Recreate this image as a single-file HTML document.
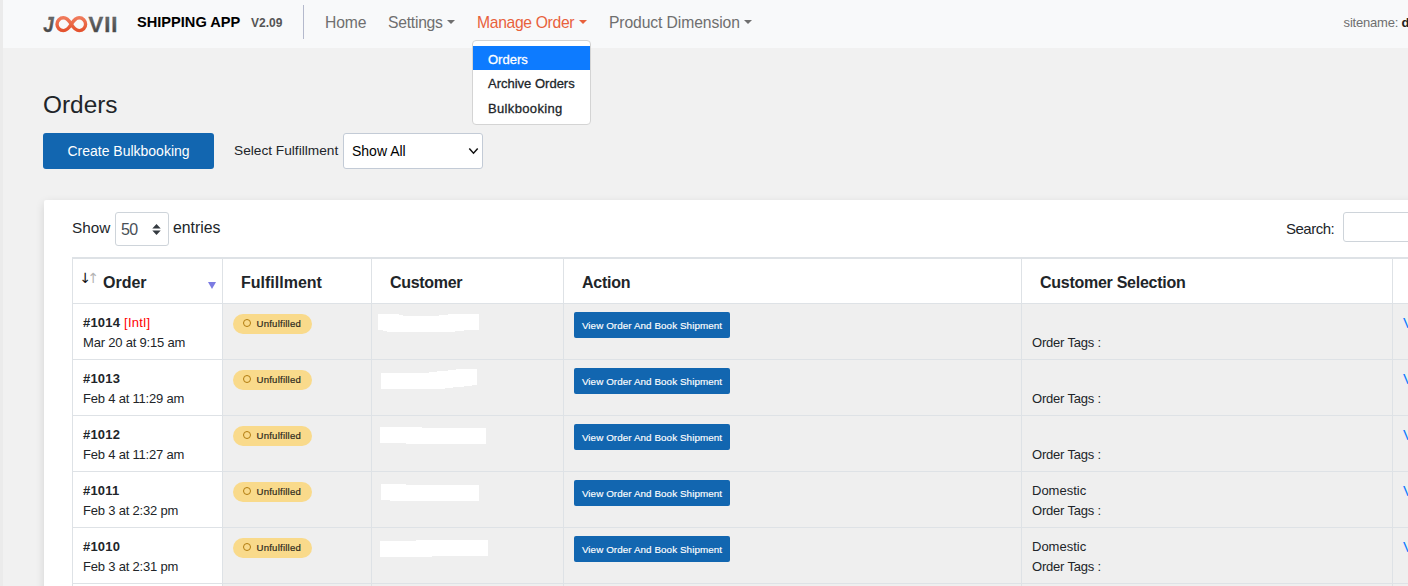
<!DOCTYPE html>
<html lang="en">
<head>
<meta charset="utf-8">
<title>Orders</title>
<style>
*{box-sizing:border-box;}
html,body{margin:0;padding:0;}
body{width:1408px;height:586px;overflow:hidden;background:#f1f1f1;font-family:"Liberation Sans",sans-serif;color:#212529;position:relative;}
.strip{position:absolute;left:0;top:0;width:3px;height:586px;background:#ebebeb;z-index:5;}
.nav{position:absolute;left:3px;top:0;width:1405px;height:48px;background:#f8f9fa;}
.abs{position:absolute;white-space:nowrap;}
.navlink{position:absolute;top:14px;font-size:15.7px;color:#6f6f6f;white-space:nowrap;line-height:18px;}
.caret{display:inline-block;width:0;height:0;border-left:4px solid transparent;border-right:4px solid transparent;border-top:4px solid currentColor;vertical-align:4px;margin-left:4px;}
.dd{position:absolute;left:472px;top:40px;width:119px;height:85px;background:#fff;border:1px solid #d4d4d4;border-radius:4px;}
.dd div{position:absolute;left:0;width:117px;height:24px;padding-left:15px;font-size:13px;line-height:24px;color:#212529;-webkit-text-stroke:0.3px currentColor;}
h1{position:absolute;left:43px;top:89px;margin:0;font-size:24.4px;font-weight:400;color:#212529;line-height:32px;}
.btn{position:absolute;left:43px;top:133px;width:171px;height:36px;background:#1266b0;color:#fff;border-radius:3px;font-size:14px;line-height:36px;text-align:center;}
.sel{position:absolute;left:343px;top:133px;width:140px;height:36px;background:#fff;border:1px solid #c3cbd6;border-radius:3px;font-size:14px;line-height:35px;padding-left:8px;color:#000;}
.card{position:absolute;left:44px;top:200px;width:1400px;height:400px;background:#fff;border-radius:2px;box-shadow:0 3px 10px rgba(0,0,0,.12);}


.th{top:273px;font-size:16px;font-weight:700;line-height:20px;color:#212529;}
.c{font-size:13px;line-height:18px;color:#212529;}

.badge{position:absolute;background:#f9da8b;border-radius:11px;height:20px;width:79px;font-size:9.6px;line-height:19.6px;letter-spacing:0.22px;color:#2e2a20;padding-left:23.5px;-webkit-text-stroke:0.2px currentColor;}
.badge i{position:absolute;left:10px;top:4.6px;width:8.4px;height:8.4px;border:1.5px solid #b27c0e;border-radius:50%;}
.vbtn{position:absolute;background:#1266b0;color:#fff;border-radius:2px;height:26px;width:156px;font-size:9.85px;letter-spacing:0.07px;line-height:28px;text-align:center;-webkit-text-stroke:0.15px currentColor;}
</style>
</head>
<body>
<div class="strip"></div>
<div class="nav"></div>
<svg class="abs" style="left:40px;top:12px" width="82" height="24" viewBox="40 12 82 24">
  <defs>
    <linearGradient id="g1" x1="0" y1="0" x2="0" y2="1"><stop offset="0" stop-color="#f07a5a"/><stop offset="1" stop-color="#e4532f"/></linearGradient>
    <linearGradient id="g2" x1="0" y1="0" x2="0" y2="1"><stop offset="0" stop-color="#777"/><stop offset="1" stop-color="#3c3c3c"/></linearGradient>
  </defs>
  <text x="0" y="32.1" transform="translate(43.2 0) scale(0.86 1)" font-family="Liberation Sans, sans-serif" font-weight="700" font-style="italic" font-size="22" fill="url(#g2)" stroke="#555" stroke-width="0.35">J</text>
  <path d="M71.3 24.2 C68.5 19.5 66.5 17.8 63.4 17.8 a6.4 6.4 0 1 0 0 12.8 C66.5 30.6 68.5 28.9 71.3 24.2 C74.1 19.5 76.1 17.8 79.2 17.8 a6.4 6.4 0 1 1 0 12.8 C76.1 30.6 74.1 28.9 71.3 24.2Z" fill="none" stroke="url(#g1)" stroke-width="3.4"/>
  <text x="88.6" y="31.5" font-family="Liberation Sans, sans-serif" font-weight="700" font-size="22" fill="url(#g2)" stroke="#555" stroke-width="0.35" letter-spacing="0.9">VII</text>
</svg>
<div class="abs" style="left:137px;top:13px;font-size:14.6px;font-weight:700;color:#000;line-height:18px;">SHIPPING APP</div>
<div class="abs" style="left:251px;top:14px;font-size:12px;font-weight:700;color:#555;line-height:18px;">V2.09</div>
<div class="abs" style="left:303px;top:5px;width:1px;height:34px;background:#b4b9cc;"></div>
<div class="navlink" style="left:325px;letter-spacing:-0.1px;">Home</div>
<div class="navlink" style="left:388px;letter-spacing:-0.25px;">Settings<span class="caret"></span></div>
<div class="navlink" style="left:477px;color:#e8613c;letter-spacing:-0.33px;">Manage Order<span class="caret" style="margin-left:5px"></span></div>
<div class="navlink" style="left:609px;letter-spacing:-0.1px;">Product Dimension<span class="caret"></span></div>
<div class="abs" style="left:1343.6px;top:14px;font-size:13px;color:#6f6f6f;line-height:18px;letter-spacing:-0.2px;">sitename: <b style="color:#222">demo</b></div>

<h1>Orders</h1>
<div class="btn">Create Bulkbooking</div>
<div class="abs" style="left:234px;top:142px;font-size:13.7px;line-height:18px;">Select Fulfillment</div>
<div class="sel">Show All
 <svg class="abs" style="left:123.5px;top:12.5px" width="11" height="9" viewBox="0 0 11 9"><path d="M1.3 1.6 L5.5 6.2 L9.7 1.6" fill="none" stroke="#111" stroke-width="1.5"/></svg>
</div>

<div class="card"></div>
<div class="abs" style="left:72px;top:218px;font-size:15.3px;line-height:20px;">Show</div>
<div class="abs" style="left:115px;top:212px;width:54px;height:34px;border:1px solid #ced4da;border-radius:3px;background:#fff;font-size:16px;line-height:34px;padding-left:5px;color:#495057;letter-spacing:-0.7px;">50
 <svg class="abs" style="left:36px;top:11px" width="9" height="11" viewBox="0 0 9 11"><path d="M4.5 0 L8.7 4.5 H0.3Z M4.5 11 L8.7 6.5 H0.3Z" fill="#343a40"/></svg>
</div>
<div class="abs" style="left:173px;top:218px;font-size:15.8px;line-height:20px;">entries</div>
<div class="abs" style="left:1286px;top:219px;font-size:15px;line-height:20px;letter-spacing:-0.5px;">Search:</div>
<div class="abs" style="left:1343px;top:212px;width:100px;height:30px;border:1px solid #ced4da;border-radius:3px;background:#fff;"></div>


<div class="abs" style="left:72px;top:257px;width:1340px;height:2px;background:#dee2e6;"></div>
<div class="abs" style="left:72px;top:259px;width:1340px;height:44px;background:#fff;"></div>
<div class="abs" style="left:223px;top:304px;width:1190px;height:290px;background:#efefef;"></div>
<div class="abs" style="left:72px;top:303px;width:1340px;height:1px;background:#dee2e6;"></div>
<div class="abs" style="left:72px;top:359px;width:1340px;height:1px;background:#dee2e6;"></div>
<div class="abs" style="left:72px;top:415px;width:1340px;height:1px;background:#dee2e6;"></div>
<div class="abs" style="left:72px;top:471px;width:1340px;height:1px;background:#dee2e6;"></div>
<div class="abs" style="left:72px;top:527px;width:1340px;height:1px;background:#dee2e6;"></div>
<div class="abs" style="left:72px;top:583px;width:1340px;height:1px;background:#dee2e6;"></div>
<div class="abs" style="left:72px;top:639px;width:1340px;height:1px;background:#dee2e6;"></div>
<div class="abs" style="left:72px;top:257px;width:1px;height:340px;background:#dee2e6;"></div>
<div class="abs" style="left:222px;top:257px;width:1px;height:340px;background:#dee2e6;"></div>
<div class="abs" style="left:371px;top:257px;width:1px;height:340px;background:#dee2e6;"></div>
<div class="abs" style="left:563px;top:257px;width:1px;height:340px;background:#dee2e6;"></div>
<div class="abs" style="left:1021px;top:257px;width:1px;height:340px;background:#dee2e6;"></div>
<div class="abs" style="left:1392px;top:257px;width:1px;height:340px;background:#dee2e6;"></div>
<div class="abs" style="left:79.5px;top:268px;font-family:'DejaVu Sans',sans-serif;font-size:14px;line-height:20px;color:#111;">&#8595;</div>
<div class="abs" style="left:87.5px;top:268px;font-family:'DejaVu Sans',sans-serif;font-size:14px;line-height:20px;color:#b5b5b5;">&#8593;</div>
<div class="abs th" style="left:103px;">Order</div>
<div class="abs" style="left:208px;top:282px;width:0;height:0;border-left:4.5px solid transparent;border-right:4.5px solid transparent;border-top:7px solid #7b7be2;"></div>
<div class="abs th" style="left:241px;">Fulfillment</div>
<div class="abs th" style="left:390px;letter-spacing:-0.3px;">Customer</div>
<div class="abs th" style="left:582px;letter-spacing:-0.25px;">Action</div>
<div class="abs th" style="left:1040px;letter-spacing:-0.27px;">Customer Selection</div>
<div class="abs c" style="left:83px;top:314px;font-weight:700;letter-spacing:0.2px;">#1014 <span style="color:#f00;font-weight:400;letter-spacing:0.3px;">[Intl]</span></div>
<div class="abs c" style="left:83px;top:334px;letter-spacing:-0.2px;">Mar 20 at 9:15 am</div>
<div class="badge" style="left:233px;top:314px;"><i></i>Unfulfilled</div>
<svg class="abs" style="left:371px;top:303px" width="192" height="56"><polygon points="7,11 28,11 28,12 32,12 32,13 68,13 68,12 77,12 77,11 108,11 108,27 93,27 93,28 84,28 84,29 16,29 16,28 12,28 12,27 7,27" fill="#fff" shape-rendering="crispEdges"/></svg>
<div class="vbtn" style="left:574px;top:312px;">View Order And Book Shipment</div>
<div class="abs c" style="left:1032px;top:334px;letter-spacing:-0.2px;">Order Tags :</div>
<div class="abs" style="left:1403px;top:313px;font-size:15px;line-height:20px;color:#0d7bff;">View</div>
<div class="abs c" style="left:83px;top:370px;font-weight:700;letter-spacing:0.2px;">#1013</div>
<div class="abs c" style="left:83px;top:390px;letter-spacing:-0.2px;">Feb 4 at 11:29 am</div>
<div class="badge" style="left:233px;top:370px;"><i></i>Unfulfilled</div>
<svg class="abs" style="left:371px;top:359px" width="192" height="56"><polygon points="10,14 58,14 58,13 66,13 66,12 77,12 77,11 85,11 85,10 106,10 106,26 101,26 101,27 93,27 93,28 82,28 82,29 74,29 74,30 10,30" fill="#fff" shape-rendering="crispEdges"/></svg>
<div class="vbtn" style="left:574px;top:368px;">View Order And Book Shipment</div>
<div class="abs c" style="left:1032px;top:390px;letter-spacing:-0.2px;">Order Tags :</div>
<div class="abs" style="left:1403px;top:369px;font-size:15px;line-height:20px;color:#0d7bff;">View</div>
<div class="abs c" style="left:83px;top:426px;font-weight:700;letter-spacing:0.2px;">#1012</div>
<div class="abs c" style="left:83px;top:446px;letter-spacing:-0.2px;">Feb 4 at 11:27 am</div>
<div class="badge" style="left:233px;top:426px;"><i></i>Unfulfilled</div>
<svg class="abs" style="left:371px;top:415px" width="192" height="56"><polygon points="9,12 51,12 51,13 115,13 115,29 35,29 35,28 9,28" fill="#fff" shape-rendering="crispEdges"/></svg>
<div class="vbtn" style="left:574px;top:424px;">View Order And Book Shipment</div>
<div class="abs c" style="left:1032px;top:446px;letter-spacing:-0.2px;">Order Tags :</div>
<div class="abs" style="left:1403px;top:425px;font-size:15px;line-height:20px;color:#0d7bff;">View</div>
<div class="abs c" style="left:83px;top:482px;font-weight:700;letter-spacing:0.2px;">#1011</div>
<div class="abs c" style="left:83px;top:502px;letter-spacing:-0.2px;">Feb 3 at 2:32 pm</div>
<div class="badge" style="left:233px;top:482px;"><i></i>Unfulfilled</div>
<svg class="abs" style="left:371px;top:471px" width="192" height="56"><polygon points="10,13 35,13 35,14 108,14 108,30 19,30 19,29 10,29" fill="#fff" shape-rendering="crispEdges"/></svg>
<div class="vbtn" style="left:574px;top:480px;">View Order And Book Shipment</div>
<div class="abs c" style="left:1032px;top:482px;">Domestic</div>
<div class="abs c" style="left:1032px;top:502px;letter-spacing:-0.2px;">Order Tags :</div>
<div class="abs" style="left:1403px;top:481px;font-size:15px;line-height:20px;color:#0d7bff;">View</div>
<div class="abs c" style="left:83px;top:538px;font-weight:700;letter-spacing:0.2px;">#1010</div>
<div class="abs c" style="left:83px;top:558px;letter-spacing:-0.2px;">Feb 3 at 2:31 pm</div>
<div class="badge" style="left:233px;top:538px;"><i></i>Unfulfilled</div>
<svg class="abs" style="left:371px;top:527px" width="192" height="56"><polygon points="9,14 45,14 45,13 117,13 117,29 61,29 61,30 9,30" fill="#fff" shape-rendering="crispEdges"/></svg>
<div class="vbtn" style="left:574px;top:536px;">View Order And Book Shipment</div>
<div class="abs c" style="left:1032px;top:538px;">Domestic</div>
<div class="abs c" style="left:1032px;top:558px;letter-spacing:-0.2px;">Order Tags :</div>
<div class="abs" style="left:1403px;top:537px;font-size:15px;line-height:20px;color:#0d7bff;">View</div>


<div class="dd">
 <div style="top:5px;padding-top:2px;height:24px;line-height:24px;background:#0d7bff;color:#fff;">Orders</div>
 <div style="top:31px;">Archive Orders</div>
 <div style="top:56px;letter-spacing:0.35px;">Bulkbooking</div>
</div>
</body>
</html>
